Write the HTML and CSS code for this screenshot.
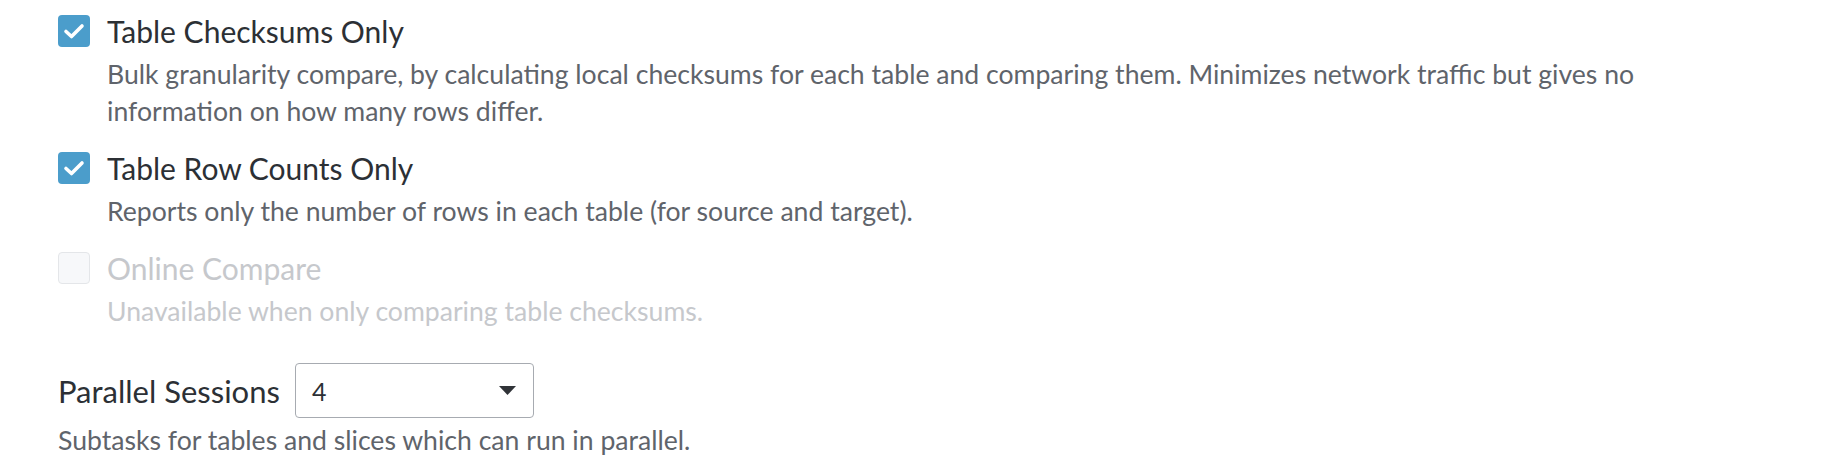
FILE: index.html
```html
<!DOCTYPE html>
<html lang="en">
<head>
<meta charset="utf-8">
<title>Compare options</title>
<link rel="stylesheet" href="styles.css">
</head>
<body>
<div class="panel">
  <div class="option">
    <div class="option-row">
      <span class="box checked">
        <svg viewBox="0 0 32 32" width="32" height="32"><path d="M8 16.5 L13.5 21.5 L24 11" fill="none" stroke="#fff" stroke-width="3.6" stroke-linecap="round" stroke-linejoin="round"/></svg>
      </span>
      <span class="title">Table Checksums Only</span>
    </div>
    <p class="desc">Bulk granularity compare, by calculating local checksums for each table and comparing them. Minimizes network traffic but gives no information on how many rows differ.</p>
  </div>
  <div class="option">
    <div class="option-row">
      <span class="box checked">
        <svg viewBox="0 0 32 32" width="32" height="32"><path d="M8 16.5 L13.5 21.5 L24 11" fill="none" stroke="#fff" stroke-width="3.6" stroke-linecap="round" stroke-linejoin="round"/></svg>
      </span>
      <span class="title">Table Row Counts Only</span>
    </div>
    <p class="desc">Reports only the number of rows in each table (for source and target).</p>
  </div>
  <div class="option disabled">
    <div class="option-row">
      <span class="box"></span>
      <span class="title">Online Compare</span>
    </div>
    <p class="desc">Unavailable when only comparing table checksums.</p>
  </div>
  <div class="field">
    <div class="field-row">
      <span class="label">Parallel Sessions</span>
      <div class="select">
        <span class="select-value">4</span>
        <svg class="caret" viewBox="0 0 17 9" width="17" height="9"><path d="M0 0 H17 L8.5 9 Z" fill="#303338"/></svg>
      </div>
    </div>
    <p class="hint">Subtasks for tables and slices which can run in parallel.</p>
  </div>
</div>
</body>
</html>
```
FILE: styles.css
```css
html, body {
  margin: 0;
  padding: 0;
  background: #ffffff;
}
body {
  font-family: Lato, "Open Sans", sans-serif;
  color: #2c3035;
}
.panel {
  padding: 15px 0 0 58px;
  width: 1640px;
}
.option {
  margin-bottom: 22px;
}
.option-row {
  display: flex;
  align-items: center;
  gap: 17px;
  height: 32px;
}
.box {
  width: 32px;
  height: 32px;
  box-sizing: border-box;
  border-radius: 4px;
  flex: none;
  display: block;
}
.box svg {
  display: block;
}
.box.checked {
  background: #4b9dcb;
}
.title {
  font-size: 30px;
  line-height: 32px;
  color: #2c3035;
}
.desc {
  margin: 9px 0 0 49px;
  font-size: 26.6px;
  line-height: 37px;
  color: #5f646b;
  max-width: 1590px;
}
.disabled .box {
  border: 1.5px solid #e4e6e9;
  background: #f7f8fa;
}
.disabled .title,
.disabled .desc {
  color: #c6c8cc;
}
.field {
  margin-top: 33px;
}
.field-row {
  display: flex;
  align-items: center;
  gap: 15px;
}
.label {
  font-size: 31px;
  line-height: 32px;
  color: #2c3035;
}
.select {
  width: 239px;
  height: 55px;
  box-sizing: border-box;
  border: 1.5px solid #a7abb1;
  border-radius: 4px;
  display: flex;
  align-items: center;
  justify-content: space-between;
  padding: 0 17px 0 16px;
}
.select-value {
  font-size: 25px;
  color: #2c3035;
}
.caret {
  display: block;
}
.hint {
  margin: 4px 0 0;
  font-size: 26.6px;
  line-height: 37px;
  color: #5f646b;
}
```
